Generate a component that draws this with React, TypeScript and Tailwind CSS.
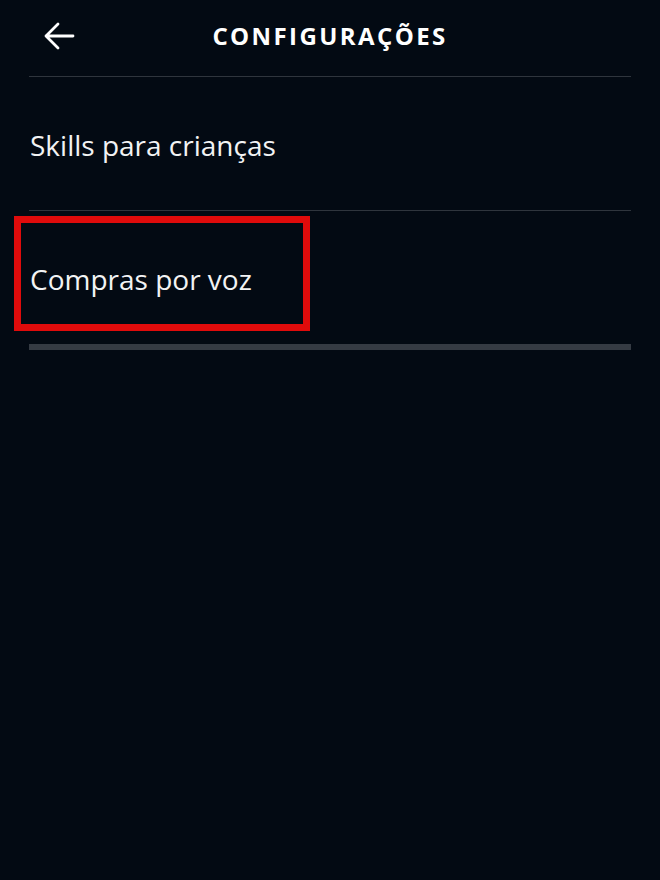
import type { ReactNode } from "react";

function BackArrow() {
  return (
    <svg width="32" height="30" viewBox="0 0 32 30" fill="none" className="block">
      <path
        d="M30 15H3M15 3L3 15l12 12"
        stroke="white"
        strokeWidth="2.8"
        strokeLinecap="round"
        strokeLinejoin="round"
      />
    </svg>
  );
}

function SettingRow({ children, last }: { children: ReactNode; last?: boolean }) {
  return (
    <div
      className={`mx-[29px] flex items-center ${
        last ? "h-[139px] border-b-[6px] border-[#353b43]" : "h-[134px] border-b border-[#2f353d]"
      }`}
    >
      <span className="mt-[3px] pl-px text-[28px] text-[#f2f3f4]">{children}</span>
    </div>
  );
}

export default function App() {
  return (
    <div
      className="h-[880px] w-[660px] bg-[#030a13] text-white"
      style={{ fontFamily: '"Open Sans", "Noto Sans", sans-serif' }}
    >
      <header className="relative mx-[29px] flex h-[77px] items-center justify-center border-b border-[#2f353d]">
        <button type="button" className="absolute left-[14px] top-[21px]">
          <BackArrow />
        </button>
        <h1 className="-mt-[4px] text-[24px] font-bold tracking-[0.1em]">CONFIGURAÇÕES</h1>
      </header>

      <SettingRow>Skills para crianças</SettingRow>
      <div className="relative">
        <div className="pointer-events-none absolute left-[14px] top-[5px] h-[115px] w-[296px] border-[7px] border-[#e00b0b]" />
        <SettingRow last>Compras por voz</SettingRow>
      </div>
    </div>
  );
}
